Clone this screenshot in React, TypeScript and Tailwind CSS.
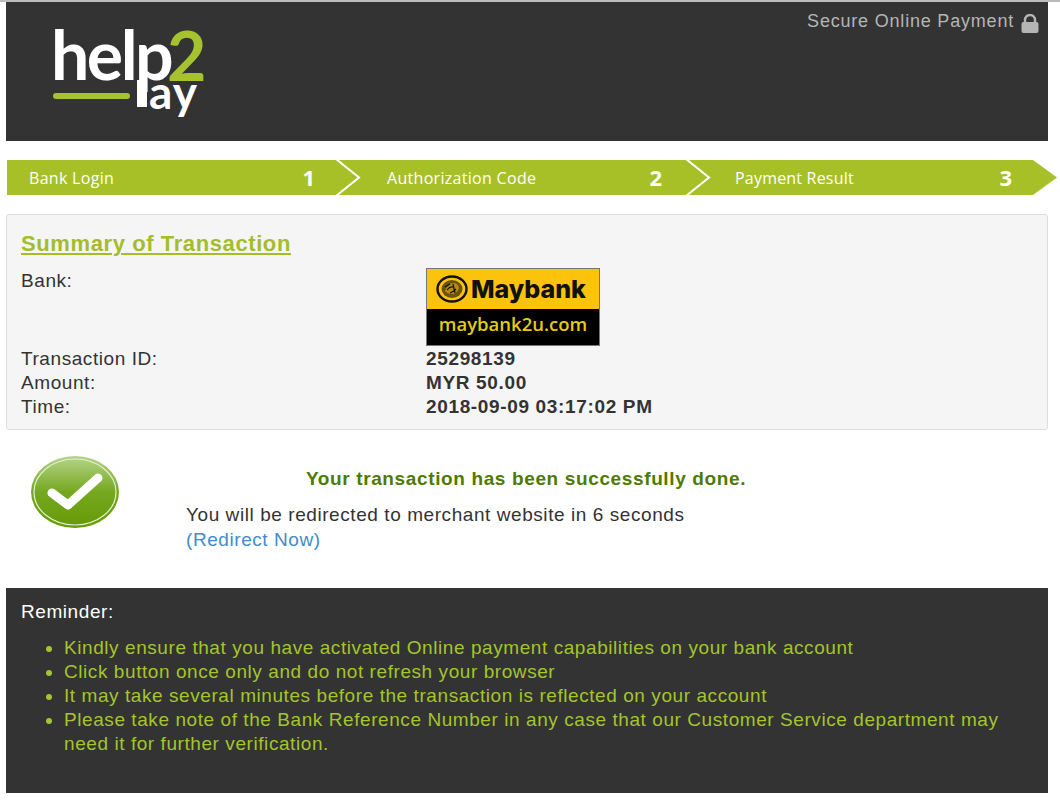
import React from 'react';

const sans = "font-['Liberation_Sans',Arial,sans-serif]";

function Logo() {
    return (
        <div className="relative h-[96px] w-[160px] font-['Lato',sans-serif] font-bold">
            <span className="absolute left-[-1px] top-[-14px] text-[68px] leading-[84px] tracking-[-2.5px] text-white">help</span>
            <span className="absolute left-[85px] top-[54px] h-[27px] w-[10px] bg-white" />
            <span className="absolute left-[115px] top-[-9px] text-[68px] font-bold leading-[76px] text-[#a6c22e]">2</span>
            <span className="absolute left-[97px] top-[38px] text-[46px] leading-[56px] tracking-[1px] text-white">ay</span>
            <span className="absolute left-[1px] top-[67px] h-[6px] w-[77px] rounded-full bg-[#a6c22e]" />
        </div>
    );
}

function LockIcon() {
    return (
        <svg width="18" height="19" viewBox="0 0 18 19" className="ml-[7px] mt-[4px]">
            <path d="M4 9V6a5 5 0 0 1 10 0v3" fill="none" stroke="#b5b5b5" strokeWidth="2.4" />
            <rect x="0.5" y="8" width="17" height="11" rx="2" fill="#b5b5b5" />
        </svg>
    );
}

function MaybankEmblem() {
    return (
        <svg width="32" height="28" viewBox="0 0 32 28">
            <ellipse cx="16" cy="14" rx="14.5" ry="12.5" fill="none" stroke="#111" strokeWidth="2.4" />
            <ellipse cx="16" cy="14" rx="10.5" ry="9" fill="#6b5209" />
            <path d="M9 16q3-8 8-8t6 5q-2 6-7 6t-7-3z" fill="#fdc30c" opacity="0.5" />
            <path d="M11 15q3-4 6-3M14 18q3-1 6-4M17 9l2 9M9 12l5-3" stroke="#111" strokeWidth="1.2" fill="none" />
        </svg>
    );
}

function MaybankLogo() {
    return (
        <div className="flex h-[78px] w-[174px] flex-col border border-[#777]">
            <div className="flex h-[40px] items-center bg-[#fdc30c] pl-[9px]">
                <MaybankEmblem />
                <span className="ml-[3px] font-['Inter',sans-serif] text-[25px] font-extrabold leading-none tracking-normal text-[#111]">Maybank</span>
            </div>
            <div className="flex flex-1 items-center justify-center bg-black pb-[6px] font-['Open_Sans',sans-serif] text-[18.5px] font-semibold leading-none tracking-normal text-[#e5cc10]">maybank2u.com</div>
        </div>
    );
}

function CheckBadge() {
    return (
        <svg width="90" height="74" viewBox="0 0 90 74">
            <defs>
                <linearGradient id="badge" x1="0" y1="0" x2="0" y2="1">
                    <stop offset="0" stopColor="#b5d58a" />
                    <stop offset="0.5" stopColor="#75a821" />
                    <stop offset="1" stopColor="#669a05" />
                </linearGradient>
            </defs>
            <ellipse cx="45" cy="37" rx="44" ry="36" fill="url(#badge)" />
            <ellipse cx="45" cy="37" rx="41" ry="33" fill="none" stroke="#e4efd0" strokeWidth="1.2" />
            <path d="M22 38 L38 50 L68 23" fill="none" stroke="#fff" strokeWidth="9" strokeLinecap="round" strokeLinejoin="round" />
        </svg>
    );
}

export default function App() {
    return (
        <div className={`h-[800px] w-[1060px] overflow-hidden bg-white text-[19px] tracking-[0.57px] ${sans}`}>
            <div className="h-[2px] bg-[#bbb]" />

            <header className="relative ml-[6px] h-[139px] w-[1042px] bg-[#333] pl-[46px] pt-[24px] tracking-normal">
                <Logo />
                <div className="absolute right-[9px] top-[6px] flex items-center text-[18px] tracking-[0.8px] text-[#b5b5b5]">
                    Secure Online Payment
                    <LockIcon />
                </div>
            </header>

            <div className="ml-[7px] mt-[19px] flex w-[1050px] bg-[#a8c027] font-['Open_Sans',sans-serif] text-white [clip-path:polygon(0_0,1026px_0,100%_50%,1026px_100%,0_100%)]">
                <div className="relative flex h-[35px] w-[350px] items-center pl-[22px]">
                    <span className="text-[16px] tracking-[0.3px]">Bank Login</span>
                    <span className="absolute right-[42px] top-0 text-[22px] font-bold leading-[35px] tracking-normal">1</span>
                    <svg width="26" height="35" viewBox="0 0 26 35" className="absolute left-[328px] top-0">
                        <path d="M1 -1 L24 17.5 L1 36" fill="none" stroke="#fff" strokeWidth="2" />
                    </svg>
                </div>
                <div className="relative flex h-[35px] w-[350px] items-center pl-[30px]">
                    <span className="text-[16px] tracking-[0.3px]">Authorization Code</span>
                    <span className="absolute right-[45px] top-0 text-[22px] font-bold leading-[35px] tracking-normal">2</span>
                    <svg width="26" height="35" viewBox="0 0 26 35" className="absolute left-[328px] top-0">
                        <path d="M1 -1 L24 17.5 L1 36" fill="none" stroke="#fff" strokeWidth="2" />
                    </svg>
                </div>
                <div className="relative flex h-[35px] w-[350px] items-center pl-[28px]">
                    <span className="text-[16px] tracking-[0.2px]">Payment Result</span>
                    <span className="absolute right-[45px] top-0 text-[22px] font-bold leading-[35px] tracking-normal">3</span>
                </div>
            </div>

            <section className="ml-[6px] mt-[19px] h-[216px] w-[1042px] rounded-[3px] border border-[#ddd] bg-[#f5f5f5] pl-[14px] pt-[14px] text-[#333]">
                <h2 className="text-[22px] font-bold leading-[30px] tracking-[0.6px] text-[#a4bd2a] underline">Summary of Transaction</h2>
                <div className="mt-[8px] grid grid-cols-[405px_1fr] leading-[24px]">
                    <div className="pt-[2px]">Bank:</div>
                    <div className="my-[1px]"><MaybankLogo /></div>
                    <div>Transaction ID:</div>
                    <div className="font-bold tracking-[0.65px]">25298139</div>
                    <div>Amount:</div>
                    <div className="font-bold tracking-[0.65px]">MYR 50.00</div>
                    <div>Time:</div>
                    <div className="font-bold tracking-[0.65px]">2018-09-09 03:17:02 PM</div>
                </div>
            </section>

            <section className="flex pl-[30px] pt-[25px]">
                <CheckBadge />
                <div className="ml-[66px] pt-[12px]">
                    <p className="w-[680px] text-center font-bold leading-[24px] tracking-[0.63px] text-[#4f7a00]">Your transaction has been successfully done.</p>
                    <p className="mt-[12px] leading-[24px] text-[#333]">You will be redirected to merchant website in 6 seconds</p>
                    <a className="mt-[1px] block leading-[24px] text-[#428bca]">(Redirect Now)</a>
                </div>
            </section>

            <section className="ml-[6px] mt-[36px] h-[205px] w-[1042px] bg-[#333] pl-[15px] pt-[12px]">
                <p className="leading-[24px] text-white">Reminder:</p>
                <ul className="mt-[12px] list-disc pl-[43px] pr-[40px] leading-[24px] text-[#a4c52c]">
                    <li>Kindly ensure that you have activated Online payment capabilities on your bank account</li>
                    <li>Click button once only and do not refresh your browser</li>
                    <li>It may take several minutes before the transaction is reflected on your account</li>
                    <li>Please take note of the Bank Reference Number in any case that our Customer Service department may need it for further verification.</li>
                </ul>
            </section>
        </div>
    );
}
